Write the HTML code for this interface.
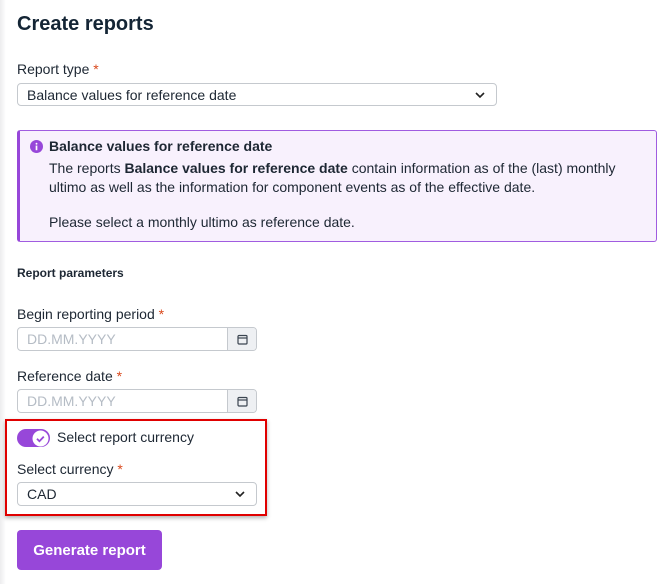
<!DOCTYPE html>
<html><head><style>
*{box-sizing:border-box;margin:0;padding:0}
body{width:670px;height:584px;background:#fff;font-family:"Liberation Sans",sans-serif;color:#1d2733;position:relative;overflow:hidden}
.shade{position:absolute;left:0;top:0;width:6px;height:584px;background:linear-gradient(to right,#ececee,#fff)}
.a{position:absolute}
h1{position:absolute;left:17px;top:13px;font-size:20px;font-weight:bold;color:#142535}
.lbl{position:absolute;left:17px;font-size:14px;color:#1d2733}
.req{color:#d9481c}
.sel{position:absolute;border:1px solid #c5c9ce;border-radius:4px;background:#fff;font-size:14px;padding:0 9px;display:flex;align-items:center}
.chev{position:absolute;right:10px;top:6px}
.inp{position:absolute;left:17px;width:240px;height:24px;border:1px solid #c5c9ce;border-radius:4px;background:#fff;font-size:14px;color:#b5bcc5;padding:3px 9px}
.cal{position:absolute;right:0;top:0;width:29px;height:22px;border-left:1px solid #c5c9ce;background:#eef0f3;border-radius:0 3px 3px 0;display:flex;align-items:center;justify-content:center}
.info{position:absolute;left:17px;top:130px;width:640px;height:112px;background:#f8f1fd;border:1px solid #a05ce0;border-left:3px solid #9747d9;border-radius:3px}
.info p{position:absolute;left:29px;font-size:14px;color:#1d2733;white-space:nowrap}
</style></head><body>
<div class="shade"></div>
<h1>Create reports</h1>
<div class="lbl" style="top:61px">Report type <span class="req">*</span></div>
<div class="sel" style="left:17px;top:83px;width:480px;height:23px">Balance values for reference date
<svg class="chev" width="12" height="10" viewBox="0 0 12 10"><path d="M2 3l4 4 4-4" fill="none" stroke="#222" stroke-width="1.6"/></svg></div>
<div class="info">
<svg class="a" style="left:10px;top:9px" width="13" height="13" viewBox="0 0 14 14"><circle cx="7" cy="7" r="7" fill="#9747d9"/><rect x="6.1" y="6" width="1.8" height="5" fill="#fff"/><circle cx="7" cy="4" r="1" fill="#fff"/></svg>
<p style="top:7px;font-weight:bold">Balance values for reference date</p>
<p style="top:29px">The reports <b>Balance values for reference date</b> contain information as of the (last) monthly</p>
<p style="top:48px">ultimo as well as the information for component events as of the effective date.</p>
<p style="top:83px">Please select a monthly ultimo as reference date.</p>
</div>
<div class="lbl" style="top:266px;font-size:12px;font-weight:bold">Report parameters</div>
<div class="lbl" style="top:306px">Begin reporting period <span class="req">*</span></div>
<div class="inp" style="top:327px">DD.MM.YYYY<div class="cal"><svg width="11" height="11" viewBox="0 0 11 11"><rect x="1" y="1.5" width="9" height="8.5" rx="1" fill="none" stroke="#3a4450" stroke-width="1.2"/><line x1="1" y1="4" x2="10" y2="4" stroke="#3a4450" stroke-width="1.2"/></svg></div></div>
<div class="lbl" style="top:368px">Reference date <span class="req">*</span></div>
<div class="inp" style="top:389px">DD.MM.YYYY<div class="cal"><svg width="11" height="11" viewBox="0 0 11 11"><rect x="1" y="1.5" width="9" height="8.5" rx="1" fill="none" stroke="#3a4450" stroke-width="1.2"/><line x1="1" y1="4" x2="10" y2="4" stroke="#3a4450" stroke-width="1.2"/></svg></div></div>
<div class="a" style="left:5px;top:419px;width:262px;height:97px;border:2px solid #e00000;box-shadow:0 2px 4px rgba(0,0,0,.3)"></div>
<div class="a" style="left:17px;top:429px;width:33px;height:18px;border-radius:9px;background:#9747d9"></div>
<svg class="a" style="left:32px;top:430px" width="17" height="17" viewBox="0 0 17 17"><circle cx="8.5" cy="8.5" r="8" fill="#fff"/><path d="M5 8.8l2.4 2.4 4.4-4.6" fill="none" stroke="#9747d9" stroke-width="1.8"/></svg>
<div class="lbl" style="left:57px;top:429px">Select report currency</div>
<div class="lbl" style="top:461px">Select currency <span class="req">*</span></div>
<div class="sel" style="left:17px;top:482px;width:240px;height:24px">CAD
<svg class="chev" width="12" height="10" viewBox="0 0 12 10"><path d="M2 3l4 4 4-4" fill="none" stroke="#222" stroke-width="1.6"/></svg></div>
<div class="a" style="left:17px;top:530px;width:145px;height:40px;background:#9747d9;border-radius:4px;color:#fff;font-weight:bold;font-size:15px;display:flex;align-items:center;justify-content:center">Generate report</div>
</body></html>
